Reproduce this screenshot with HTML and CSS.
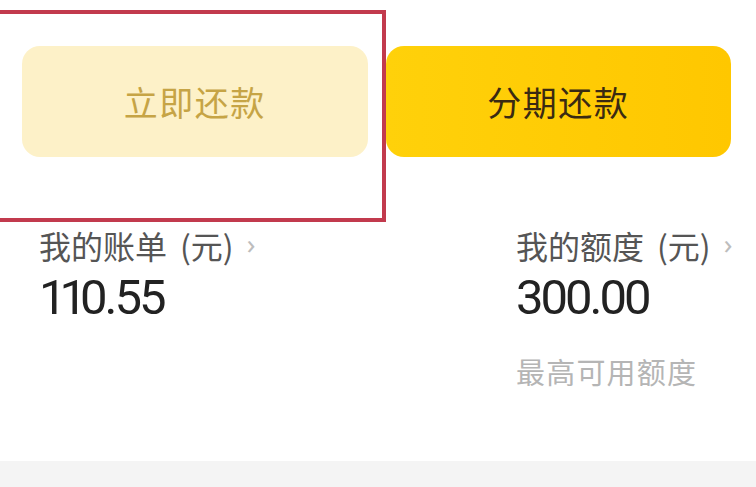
FILE: index.html
```html
<!DOCTYPE html>
<html lang="zh-CN">
<head>
<meta charset="utf-8">
<title>还款</title>
<link rel="stylesheet" href="styles.css">
</head>
<body>
<div class="page">
  <div class="actions">
    <button class="btn btn-light">立即还款</button>
    <button class="btn btn-primary">分期还款</button>
  </div>
  <div class="highlight"></div>
  <div class="stats">
    <div class="stat stat-bill">
      <div class="stat-label">我的账单<span class="unit">(元)</span><span class="chev">›</span></div>
      <div class="stat-value"><span class="one">11</span>0.55</div>
    </div>
    <div class="stat stat-quota">
      <div class="stat-label">我的额度<span class="unit">(元)</span><span class="chev">›</span></div>
      <div class="stat-value">300.00</div>
      <div class="stat-note">最高可用额度</div>
    </div>
  </div>
  <div class="band"></div>
</div>
</body>
</html>
```
FILE: styles.css
```css
html, body {
  margin: 0;
  padding: 0;
  background: #ffffff;
}
body {
  font-family: "Noto Sans CJK SC", "Noto Sans", sans-serif;
  width: 756px;
  height: 487px;
  overflow: hidden;
}
.page {
  position: relative;
  width: 756px;
  height: 487px;
  display: flex;
  flex-direction: column;
}
.actions {
  display: flex;
  gap: 18px;
  padding: 46px 25px 0 22px;
}
.btn {
  flex: 1;
  height: 111px;
  border: none;
  border-radius: 18px;
  font-family: "Noto Sans CJK SC", sans-serif;
  font-size: 34px;
  letter-spacing: 1.5px;
  font-weight: 400;
  padding: 0;
}
.btn-light {
  background: #fdf1c8;
  color: #c6a445;
}
.btn-primary {
  background: linear-gradient(90deg, #ffd10a 0%, #ffc700 100%);
  color: #3a2a12;
}
.highlight {
  position: absolute;
  left: -10px;
  top: 10px;
  width: 388px;
  height: 204px;
  border: 4px solid #c23a4d;
  pointer-events: none;
}
.stats {
  display: flex;
  margin-top: 68px;
  padding-left: 39px;
}
.stat {
  display: flex;
  flex-direction: column;
}
.stat-bill {
  width: 477px;
}
.stat-label {
  font-size: 32px;
  line-height: 40px;
  color: #555555;
  white-space: nowrap;
  display: flex;
  align-items: center;
}
.unit {
  margin-left: 13px;
}
.chev {
  margin-left: 13px;
  font-family: "Noto Sans", sans-serif;
  font-size: 28px;
  line-height: 28px;
  color: #bdbdbd;
  padding-bottom: 4px;
}
.stat-value {
  font-family: "Roboto", "Noto Sans", sans-serif;
  font-size: 49px;
  line-height: 56px;
  font-weight: 400;
  letter-spacing: -3px;
  color: #222222;
  margin-top: 5px;
}
.one {
  letter-spacing: -7px;
}
.stat-note {
  margin-top: 27px;
  font-size: 29px;
  line-height: 36px;
  letter-spacing: 1.2px;
  color: #b5b5b5;
}
.band {
  position: absolute;
  left: 0;
  right: 0;
  bottom: 0;
  height: 26px;
  background: #f4f4f4;
}
```
